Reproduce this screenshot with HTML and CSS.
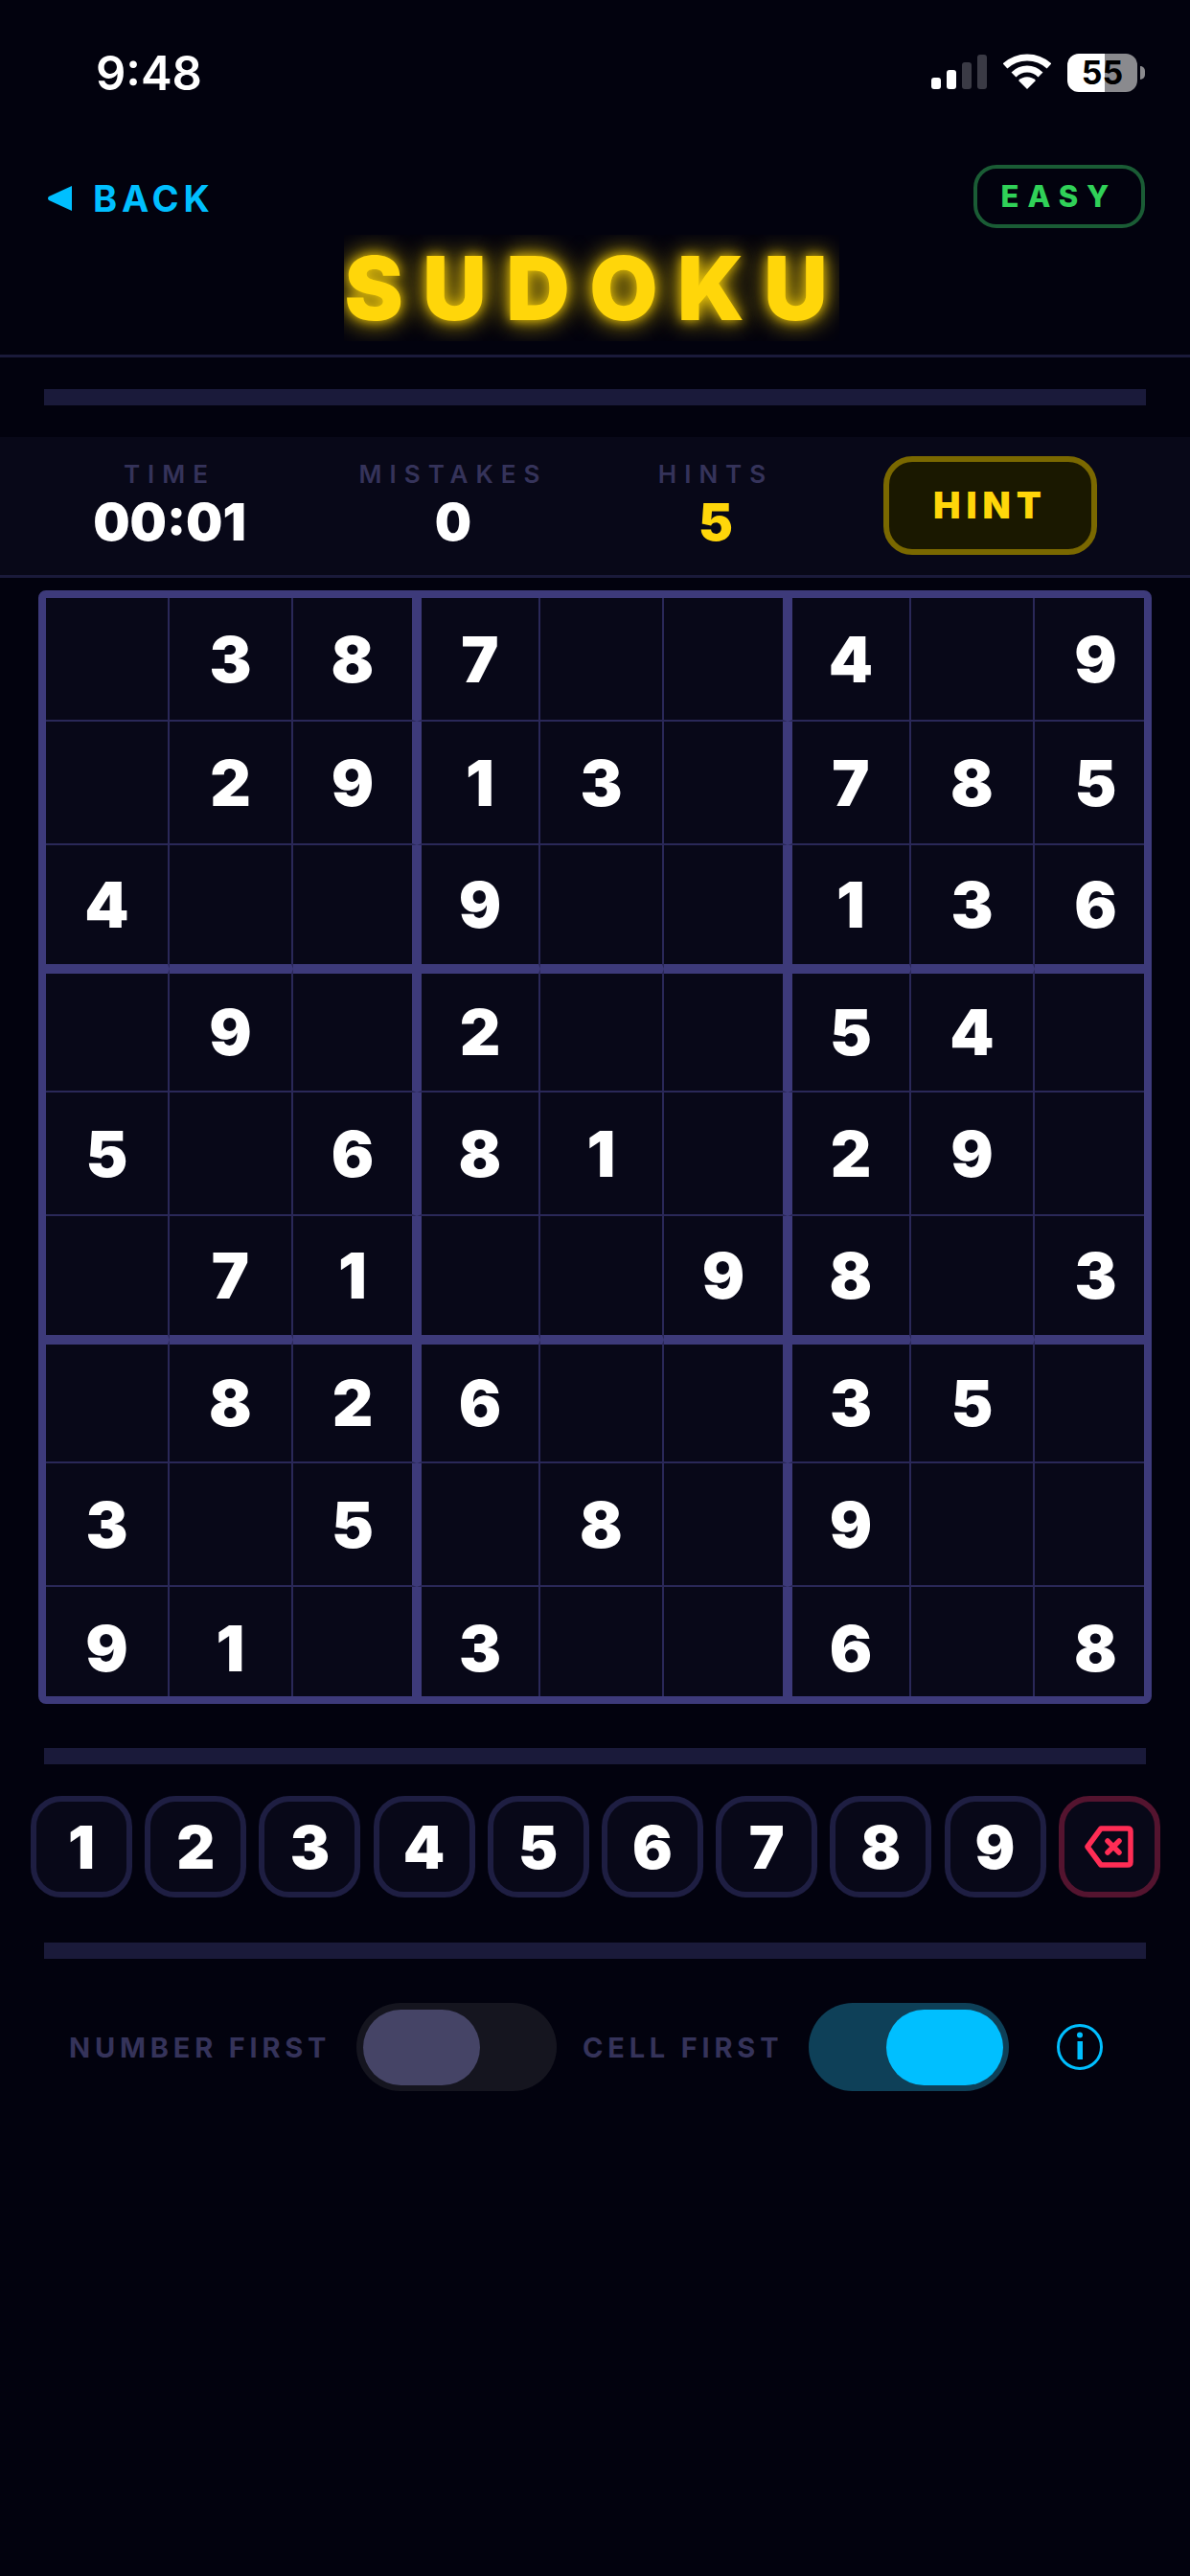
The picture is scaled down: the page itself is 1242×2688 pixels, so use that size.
FILE: index.html
```html
<!DOCTYPE html>
<html lang="en">
<head>
  <meta charset="UTF-8">
  <meta name="viewport" content="width=device-width, initial-scale=1.0">
  <title>Sudoku</title>
  <link rel="stylesheet" href="styles.css">
</head>
<body>

  <!-- Status bar -->
  <div class="status-bar">
    <div class="clock">9:48</div>
    <div class="status-icons">
      <div class="signal">
        <span class="bar bar-1"></span>
        <span class="bar bar-2"></span>
        <span class="bar bar-3"></span>
        <span class="bar bar-4"></span>
      </div>
      <svg class="wifi" width="50" height="37" viewBox="0 0 50 37">
        <path d="M2 13 C15 1 35 1 48 13" fill="none" stroke="#fff" stroke-width="7" stroke-linecap="butt"/>
        <path d="M11 22 C19 14 31 14 39 22" fill="none" stroke="#fff" stroke-width="7"/>
        <path d="M25 37 L16 28 C21 23 29 23 34 28 Z" fill="#fff"/>
      </svg>
      <div class="battery">
        <div class="battery-body"><span>55</span></div>
        <div class="battery-nub"></div>
      </div>
    </div>
  </div>

  <!-- Header -->
  <div class="header">
    <div class="header-top">
      <div class="back">
        <svg class="back-arrow" width="26" height="26" viewBox="0 0 26 26">
          <path d="M26 0 V26 L2 15 Q0 13 2 11 Z" fill="#00bfff"/>
        </svg>
        <span>BACK</span>
      </div>
      <div class="badge">EASY</div>
    </div>
    <div class="title-row">
      <h1>SUDOK<span class="title-end">U</span></h1>
    </div>
  </div>

  <div class="strip strip-top"></div>

  <!-- Stats -->
  <div class="stats">
    <div class="stat stat-time">
      <div class="stat-label">TIME</div>
      <div class="stat-value">00:01</div>
    </div>
    <div class="stat stat-mistakes">
      <div class="stat-label">MISTAKES</div>
      <div class="stat-value">0</div>
    </div>
    <div class="stat stat-hints">
      <div class="stat-label">HINTS</div>
      <div class="stat-value yellow">5</div>
    </div>
    <div class="hint-btn">HINT</div>
  </div>

  <!-- Board -->
  <div class="board" id="board"></div>

  <div class="strip strip-mid"></div>

  <!-- Number pad -->
  <div class="numpad">
    <div class="key">1</div>
    <div class="key">2</div>
    <div class="key">3</div>
    <div class="key">4</div>
    <div class="key">5</div>
    <div class="key">6</div>
    <div class="key">7</div>
    <div class="key">8</div>
    <div class="key">9</div>
    <div class="key key-delete">
      <svg width="51" height="44" viewBox="0 0 51 44">
        <path d="M17 3 H45 Q48 3 48 6 V38 Q48 41 45 41 H17 L3 22 Z" fill="none" stroke="#ff2d55" stroke-width="5.500" stroke-linejoin="round"/>
        <path d="M24 16 L36 28 M36 16 L24 28" fill="none" stroke="#ff2d55" stroke-width="5.500" stroke-linecap="round"/>
      </svg>
    </div>
  </div>

  <div class="strip strip-bottom"></div>

  <!-- Input mode toggles -->
  <div class="modes">
    <span class="mode-label label-number">NUMBER FIRST</span>
    <div class="toggle toggle-off"><div class="thumb"></div></div>
    <span class="mode-label label-cell">CELL FIRST</span>
    <div class="toggle toggle-on"><div class="thumb"></div></div>
    <svg class="info" width="48" height="48" viewBox="0 0 48 48">
      <circle cx="24" cy="24" r="22.500" fill="none" stroke="#00bfff" stroke-width="3"/>
      <circle cx="24" cy="11.500" r="3" fill="#00bfff"/>
      <rect x="21.500" y="18" width="5.500" height="19" fill="#00bfff"/>
    </svg>
  </div>

  <script>
    const puzzle = [
      '038700409',
      '029130785',
      '400900136',
      '090200540',
      '506810290',
      '071009803',
      '082600350',
      '305080900',
      '910300608'
    ];

    const board = document.getElementById('board');

    puzzle.forEach((row, r) => {
      row.split('').forEach((val, c) => {
        const cell = document.createElement('div');
        cell.className = 'cell';
        if (c === 2 || c === 5) cell.classList.add('box-right');
        if (c === 3 || c === 6) cell.classList.add('box-left');
        if (r === 2 || r === 5) cell.classList.add('box-bottom');
        if (r === 3 || r === 6) cell.classList.add('box-top');
        cell.innerText = val === '0' ? '' : val;
        board.appendChild(cell);
      });
    });
  </script>

</body>
</html>
```

FILE: styles.css
```css
* { box-sizing: border-box; }
html, body {
  margin: 0;
  padding: 0;
  background: #02020e;
  color: #fff;
  font-family: 'Inter', sans-serif;
}
body {
  width: 1242px;
  height: 2688px;
  overflow: hidden;
}

/* status bar */
.status-bar {
  height: 172px;
  padding: 51px 47px 0 100px;
  display: flex;
  justify-content: space-between;
  align-items: flex-start;
}
.clock {
  font-size: 49px;
  line-height: 52px;
  font-weight: 600;
}
.status-icons {
  display: flex;
  align-items: flex-start;
  margin-top: 5px;
}
.signal {
  display: flex;
  align-items: flex-end;
  gap: 6px;
  height: 36px;
  margin-top: 1px;
  margin-right: 17px;
}
.bar {
  width: 10px;
  border-radius: 3px;
  background: #fff;
}
.bar-1 { height: 12px; }
.bar-2 { height: 20px; }
.bar-3 { height: 28px; background: #3a3a45; }
.bar-4 { height: 36px; background: #3a3a45; }
.wifi { margin-right: 17px; }
.battery {
  display: flex;
  align-items: center;
  gap: 3px;
}
.battery-body {
  width: 73px;
  height: 40px;
  border-radius: 12px;
  background: linear-gradient(90deg, #fff 0 39px, #8a8a8e 39px);
  color: #000;
  font-size: 34px;
  font-weight: 700;
  text-align: center;
  line-height: 40px;
}
.battery-nub {
  width: 5px;
  height: 14px;
  border-radius: 0 5px 5px 0;
  background: #8a8a8e;
}

/* header */
.header {
  height: 201px;
  border-bottom: 3px solid #1a1a3a;
  padding: 0 47px 0 49px;
}
.header-top {
  display: flex;
  justify-content: space-between;
  align-items: center;
  height: 66px;
}
.back {
  display: flex;
  align-items: center;
  gap: 22px;
  color: #00bfff;
  font-size: 38px;
  font-weight: 700;
  letter-spacing: 4.800px;
  margin-top: 4px;
}
.badge {
  width: 179px;
  height: 66px;
  border: 4px solid #1a5c35;
  border-radius: 24px;
  color: #30d158;
  font-size: 31px;
  font-weight: 800;
  letter-spacing: 9px;
  text-align: center;
  line-height: 58px;
}
.title-row {
  display: flex;
  justify-content: center;
  padding-right: 10px;
  margin-top: 7px;
}
h1 {
  margin: 0;
  padding: 0 0 0 1px;
  width: 517px;
  height: 111px;
  overflow: hidden;
  white-space: nowrap;
  font-size: 92px;
  line-height: 111px;
  font-weight: 900;
  letter-spacing: 20.500px;
  color: #ffd60a;
  text-shadow: 0 0 12px rgba(255,214,10,0.8), 0 0 24px rgba(255,214,10,0.7), 0 0 36px rgba(255,214,10,0.35);
}
.title-end { letter-spacing: 0; }

/* the empty strips */
.strip {
  height: 17px;
  margin: 0 46px;
  background: #1a1a3a;
}
.strip-top { margin-top: 33px; }
.strip-mid { margin-top: 46px; }
.strip-bottom { margin-top: 47px; }

/* stats */
.stats {
  margin-top: 33px;
  height: 147px;
  background: #080818;
  border-bottom: 3px solid #1a1a3a;
  display: flex;
  align-items: flex-start;
  position: relative;
}
.stat {
  width: 240px;
  text-align: center;
  padding-top: 23px;
}
.stat-time { margin-left: 57px; }
.stat-mistakes { margin-left: 56px; }
.stat-hints { margin-left: 34px; }
.stat-label {
  font-size: 26px;
  line-height: 32px;
  font-weight: 600;
  letter-spacing: 8px;
  color: #35335a;
}
.stat-value {
  font-size: 54px;
  line-height: 58px;
  font-weight: 900;
  margin-top: 5px;
}
.yellow { color: #ffd60a; }
.hint-btn {
  position: absolute;
  left: 922px;
  top: 20px;
  width: 223px;
  height: 103px;
  border: 6px solid #7a6800;
  border-radius: 30px;
  background: #1a1800;
  color: #ffd60a;
  font-size: 38px;
  font-weight: 900;
  letter-spacing: 6px;
  text-align: center;
  line-height: 91px;
}

/* board */
.board {
  margin: 13px 0 0 40px;
  width: 1162px;
  height: 1162px;
  border: 8px solid #3d3a7a;
  border-radius: 8px;
  background: #080818;
  overflow: hidden;
  display: grid;
  grid-template-columns: repeat(9, 129px);
  grid-template-rows: repeat(9, 129px);
}
.cell {
  display: flex;
  align-items: center;
  justify-content: center;
  border-right: 2px solid #2a2858;
  border-bottom: 2px solid #2a2858;
  background: #080818;
  font-size: 66px;
  font-weight: 900;
  color: #fff;
}
.box-right { border-right: 5px solid #3d3a7a; }
.box-left { border-left: 5px solid #3d3a7a; }
.box-bottom { border-bottom: 5px solid #3d3a7a; }
.box-top { border-top: 5px solid #3d3a7a; }

/* number pad */
.numpad {
  margin-top: 33px;
  padding-left: 32px;
  display: flex;
  gap: 13.200px;
}
.key {
  width: 106px;
  height: 106px;
  border: 6px solid #1e1e42;
  border-radius: 32px;
  background: #080818;
  display: flex;
  align-items: center;
  justify-content: center;
  font-size: 62px;
  font-weight: 900;
}
.key-delete { border-color: #54142f; }

/* toggles */
.modes {
  margin-top: 46px;
  display: flex;
  align-items: center;
  padding-left: 72px;
}
.mode-label {
  font-size: 29px;
  font-weight: 700;
  letter-spacing: 4.800px;
  color: #35335a;
  white-space: nowrap;
}
.label-number { width: 300px; }
.label-cell { width: 236px; margin-left: 27px; }
.toggle {
  width: 209px;
  height: 92px;
  border-radius: 46px;
  padding: 7px 0;
  display: flex;
}
.thumb {
  width: 122px;
  height: 79px;
  border-radius: 40px;
}
.toggle-off { background: #15151f; padding-left: 7px; }
.toggle-off .thumb { background: #454466; }
.toggle-on { background: #0e4058; justify-content: flex-end; padding-right: 6px; }
.toggle-on .thumb { background: #00bfff; }
.info { margin-left: 50px; }
```
